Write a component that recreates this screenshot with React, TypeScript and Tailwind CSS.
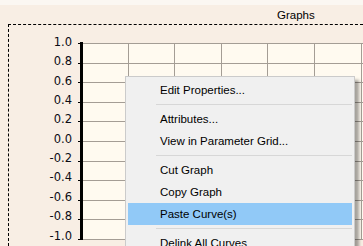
const yLabels = ['1.0', '0.8', '0.6', '0.4', '0.2', '0.0', '-0.2', '-0.4', '-0.6', '-0.8', '-1.0'];
const gridX = [56, 102, 149, 195, 242, 289];

type MenuEntry = { label: string; active?: boolean } | 'sep';

const menuItems: MenuEntry[] = [
  { label: 'Edit Properties...' },
  'sep',
  { label: 'Attributes...' },
  { label: 'View in Parameter Grid...' },
  'sep',
  { label: 'Cut Graph' },
  { label: 'Copy Graph' },
  { label: 'Paste Curve(s)', active: true },
  'sep',
  { label: 'Delink All Curves' },
];

function PlotGrid() {
  return (
    <svg width="300" height="213" className="block shrink-0">
      <rect x="11" y="10" width="289" height="197" fill="#fffaf0" />
      {yLabels.map((_, i) => {
        const y = 10.5 + Math.round(19.6 * i);
        return (
          <g key={i}>
            <line x1="11" x2="300" y1={y} y2={y} stroke="#a49d95" strokeWidth="1" />
            <line x1="6" x2="9" y1={y} y2={y} stroke="#000" strokeWidth="1" />
          </g>
        );
      })}
      {gridX.map((x) => (
        <line key={x} x1={x + 0.5} x2={x + 0.5} y1="10" y2="207" stroke="#a49d95" strokeWidth="1" />
      ))}
      <rect x="8" y="9" width="3" height="198" fill="#000" />
    </svg>
  );
}

function ContextMenu() {
  return (
    <div className="absolute left-[125px] top-[76px] w-[230px] border border-[#cbcbcb] bg-[#f0f0f0] p-[2px] shadow-[4px_4px_3px_rgba(0,0,0,0.35)] font-['Liberation_Sans',sans-serif] text-[11.5px] text-black">
      {menuItems.map((item, i) =>
        item === 'sep' ? (
          <div key={i} className="h-[7px] flex items-center pl-[28px]">
            <div className="h-px w-full bg-[#d7d7d7]" />
          </div>
        ) : (
          <div
            key={i}
            className={`h-[22px] flex items-center pl-[32px] pt-px ${item.active ? 'bg-[#91c9f7]' : ''}`}
          >
            {item.label}
          </div>
        )
      )}
    </div>
  );
}

export default function App() {
  return (
    <div className="relative w-[363px] h-[246px] overflow-hidden bg-[#f8eee4]">
      <div className="h-[5px] bg-[#fbf7f2]" />
      <div className="h-[19px] pl-[277px] pt-[3px] leading-[14px] font-['Liberation_Sans',sans-serif] text-[11.5px] text-black">
        Graphs
      </div>
      <div className="ml-[8px] h-[222px] border-t border-l border-dashed border-black pt-[8px] flex">
        <div className="w-[63px] shrink-0 flex flex-col font-['DejaVu_Sans',sans-serif] text-[11.5px] text-[#0c0c14]">
          {yLabels.map((l) => (
            <div key={l} className="h-[19.6px] flex items-center justify-end leading-none">
              {l}
            </div>
          ))}
        </div>
        <PlotGrid />
      </div>
      <ContextMenu />
    </div>
  );
}
